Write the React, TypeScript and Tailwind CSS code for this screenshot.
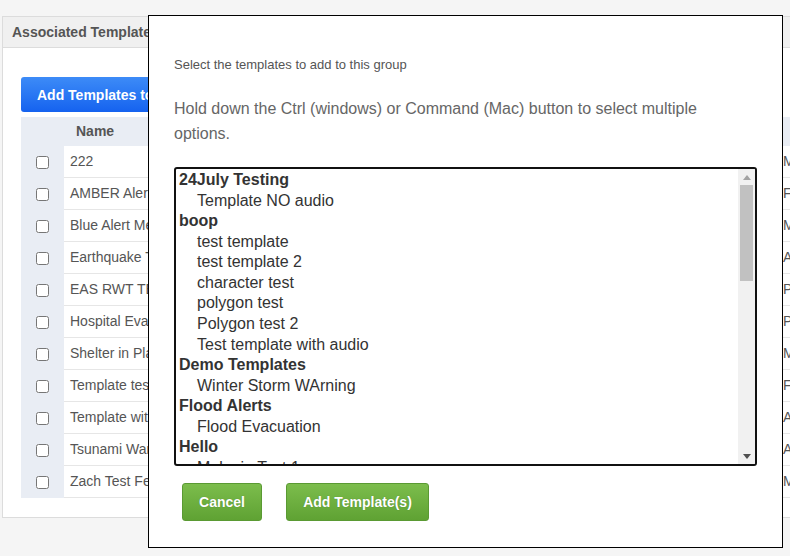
import React from 'react';

const rows = [
  { name: '222', tail: 'M' },
  { name: 'AMBER Alert Message', tail: 'F' },
  { name: 'Blue Alert Message', tail: 'M' },
  { name: 'Earthquake Template', tail: 'A' },
  { name: 'EAS RWT TEST', tail: 'PM' },
  { name: 'Hospital Evacuation', tail: 'PM' },
  { name: 'Shelter in Place', tail: 'M' },
  { name: 'Template test', tail: 'F' },
  { name: 'Template with audio', tail: 'AM' },
  { name: 'Tsunami Warning', tail: 'AM' },
  { name: 'Zach Test Feb', tail: 'M' },
];

const groups: { label: string; items: string[] }[] = [
  { label: '24July Testing', items: ['Template NO audio'] },
  {
    label: 'boop',
    items: ['test template', 'test template 2', 'character test', 'polygon test', 'Polygon test 2', 'Test template with audio'],
  },
  { label: 'Demo Templates', items: ['Winter Storm WArning'] },
  { label: 'Flood Alerts', items: ['Flood Evacuation'] },
  { label: 'Hello', items: ['Melanie Test 1', 'Melanie Test 2'] },
];

function GreenButton({ children, width }: { children: React.ReactNode; width: string }) {
  return (
    <button
      className={`${width} h-[38px] rounded-[3px] border border-[#5a9a33] bg-gradient-to-b from-[#7cbd4c] to-[#5fa233] text-[14px] font-bold text-white [text-shadow:0_0_1px_rgba(0,0,0,0.25)]`}
    >
      {children}
    </button>
  );
}

export default function App() {
  return (
    <div
      className="relative w-[790px] h-[556px] overflow-hidden bg-[#f5f5f5]"
      style={{ fontFamily: '"Liberation Sans", Arial, sans-serif' }}
    >
      {/* background panel */}
      <div className="ml-[2px] mt-[16px] w-[820px] h-[502px] border border-[#dcdcdc] bg-white">
        <div className="h-[31px] flex items-center pl-[9px] bg-[#f0f0f0] border-b border-[#dcdcdc] text-[14px] font-bold text-[#555]">
          Associated Templates
        </div>
        <div className="pl-[18px] pt-[29px]">
          <button className="h-[35px] px-[16px] pt-[2px] rounded-[3px] bg-gradient-to-b from-[#3d8bf7] to-[#1562ef] text-[14px] font-bold text-white">
            Add Templates to Group
          </button>
          <div className="mt-[5px] w-[790px]">
            <div className="flex h-[29px] bg-[#e9edf4] text-[14px] font-bold text-[#555]">
              <div className="w-[43px]" />
              <div className="flex items-center pl-[12px]">Name</div>
            </div>
            {rows.map((r) => (
              <div key={r.name} className="flex h-[32px] text-[14px] text-[#555]">
                <div className="w-[43px] flex items-center justify-center bg-[#e9edf4]">
                  <input type="checkbox" className="w-[13px] h-[13px] m-0" />
                </div>
                <div className="flex-1 flex items-center border-b border-[#e6e6e6] pl-[6px]">
                  <div className="w-[713px]">{r.name}</div>
                  <div>{r.tail}</div>
                </div>
              </div>
            ))}
          </div>
        </div>
      </div>

      {/* modal */}
      <div className="absolute left-[148px] top-[15px] w-[635px] h-[533px] border border-black bg-white pl-[25px]">
        <p className="mt-[41px] text-[13px] leading-[16px] text-[#555]">Select the templates to add to this group</p>
        <p className="mt-[23px] w-[560px] text-[16px] leading-[25px] text-[#666]">
          Hold down the Ctrl (windows) or Command (Mac) button to select multiple options.
        </p>
        <div className="mt-[21px] w-[583px] h-[299px] border-2 border-[#111] rounded-[3px] flex overflow-hidden">
          <div className="flex-1 overflow-hidden text-[16px] leading-[20.57px] text-[#333] pl-[3px] pt-[1px]">
            {groups.map((g) => (
              <div key={g.label}>
                <div className="font-bold">{g.label}</div>
                {g.items.map((it) => (
                  <div key={it} className="pl-[18px]">
                    {it}
                  </div>
                ))}
              </div>
            ))}
          </div>
          <div className="w-[17px] bg-[#f1f1f1] flex flex-col items-center">
            <div className="h-[16px] flex items-center justify-center">
              <svg width="8" height="5" viewBox="0 0 8 5">
                <path d="M0 5 L4 0 L8 5 Z" fill="#a3a3a3" />
              </svg>
            </div>
            <div className="w-[13px] h-[96px] bg-[#c1c1c1]" />
            <div className="flex-1" />
            <div className="h-[16px] flex items-center justify-center">
              <svg width="8" height="5" viewBox="0 0 8 5">
                <path d="M0 0 L4 5 L8 0 Z" fill="#505050" />
              </svg>
            </div>
          </div>
        </div>
        <div className="mt-[17px] ml-[8px] flex gap-[24px]">
          <GreenButton width="w-[80px]">Cancel</GreenButton>
          <GreenButton width="w-[143px]">Add Template(s)</GreenButton>
        </div>
      </div>
    </div>
  );
}
